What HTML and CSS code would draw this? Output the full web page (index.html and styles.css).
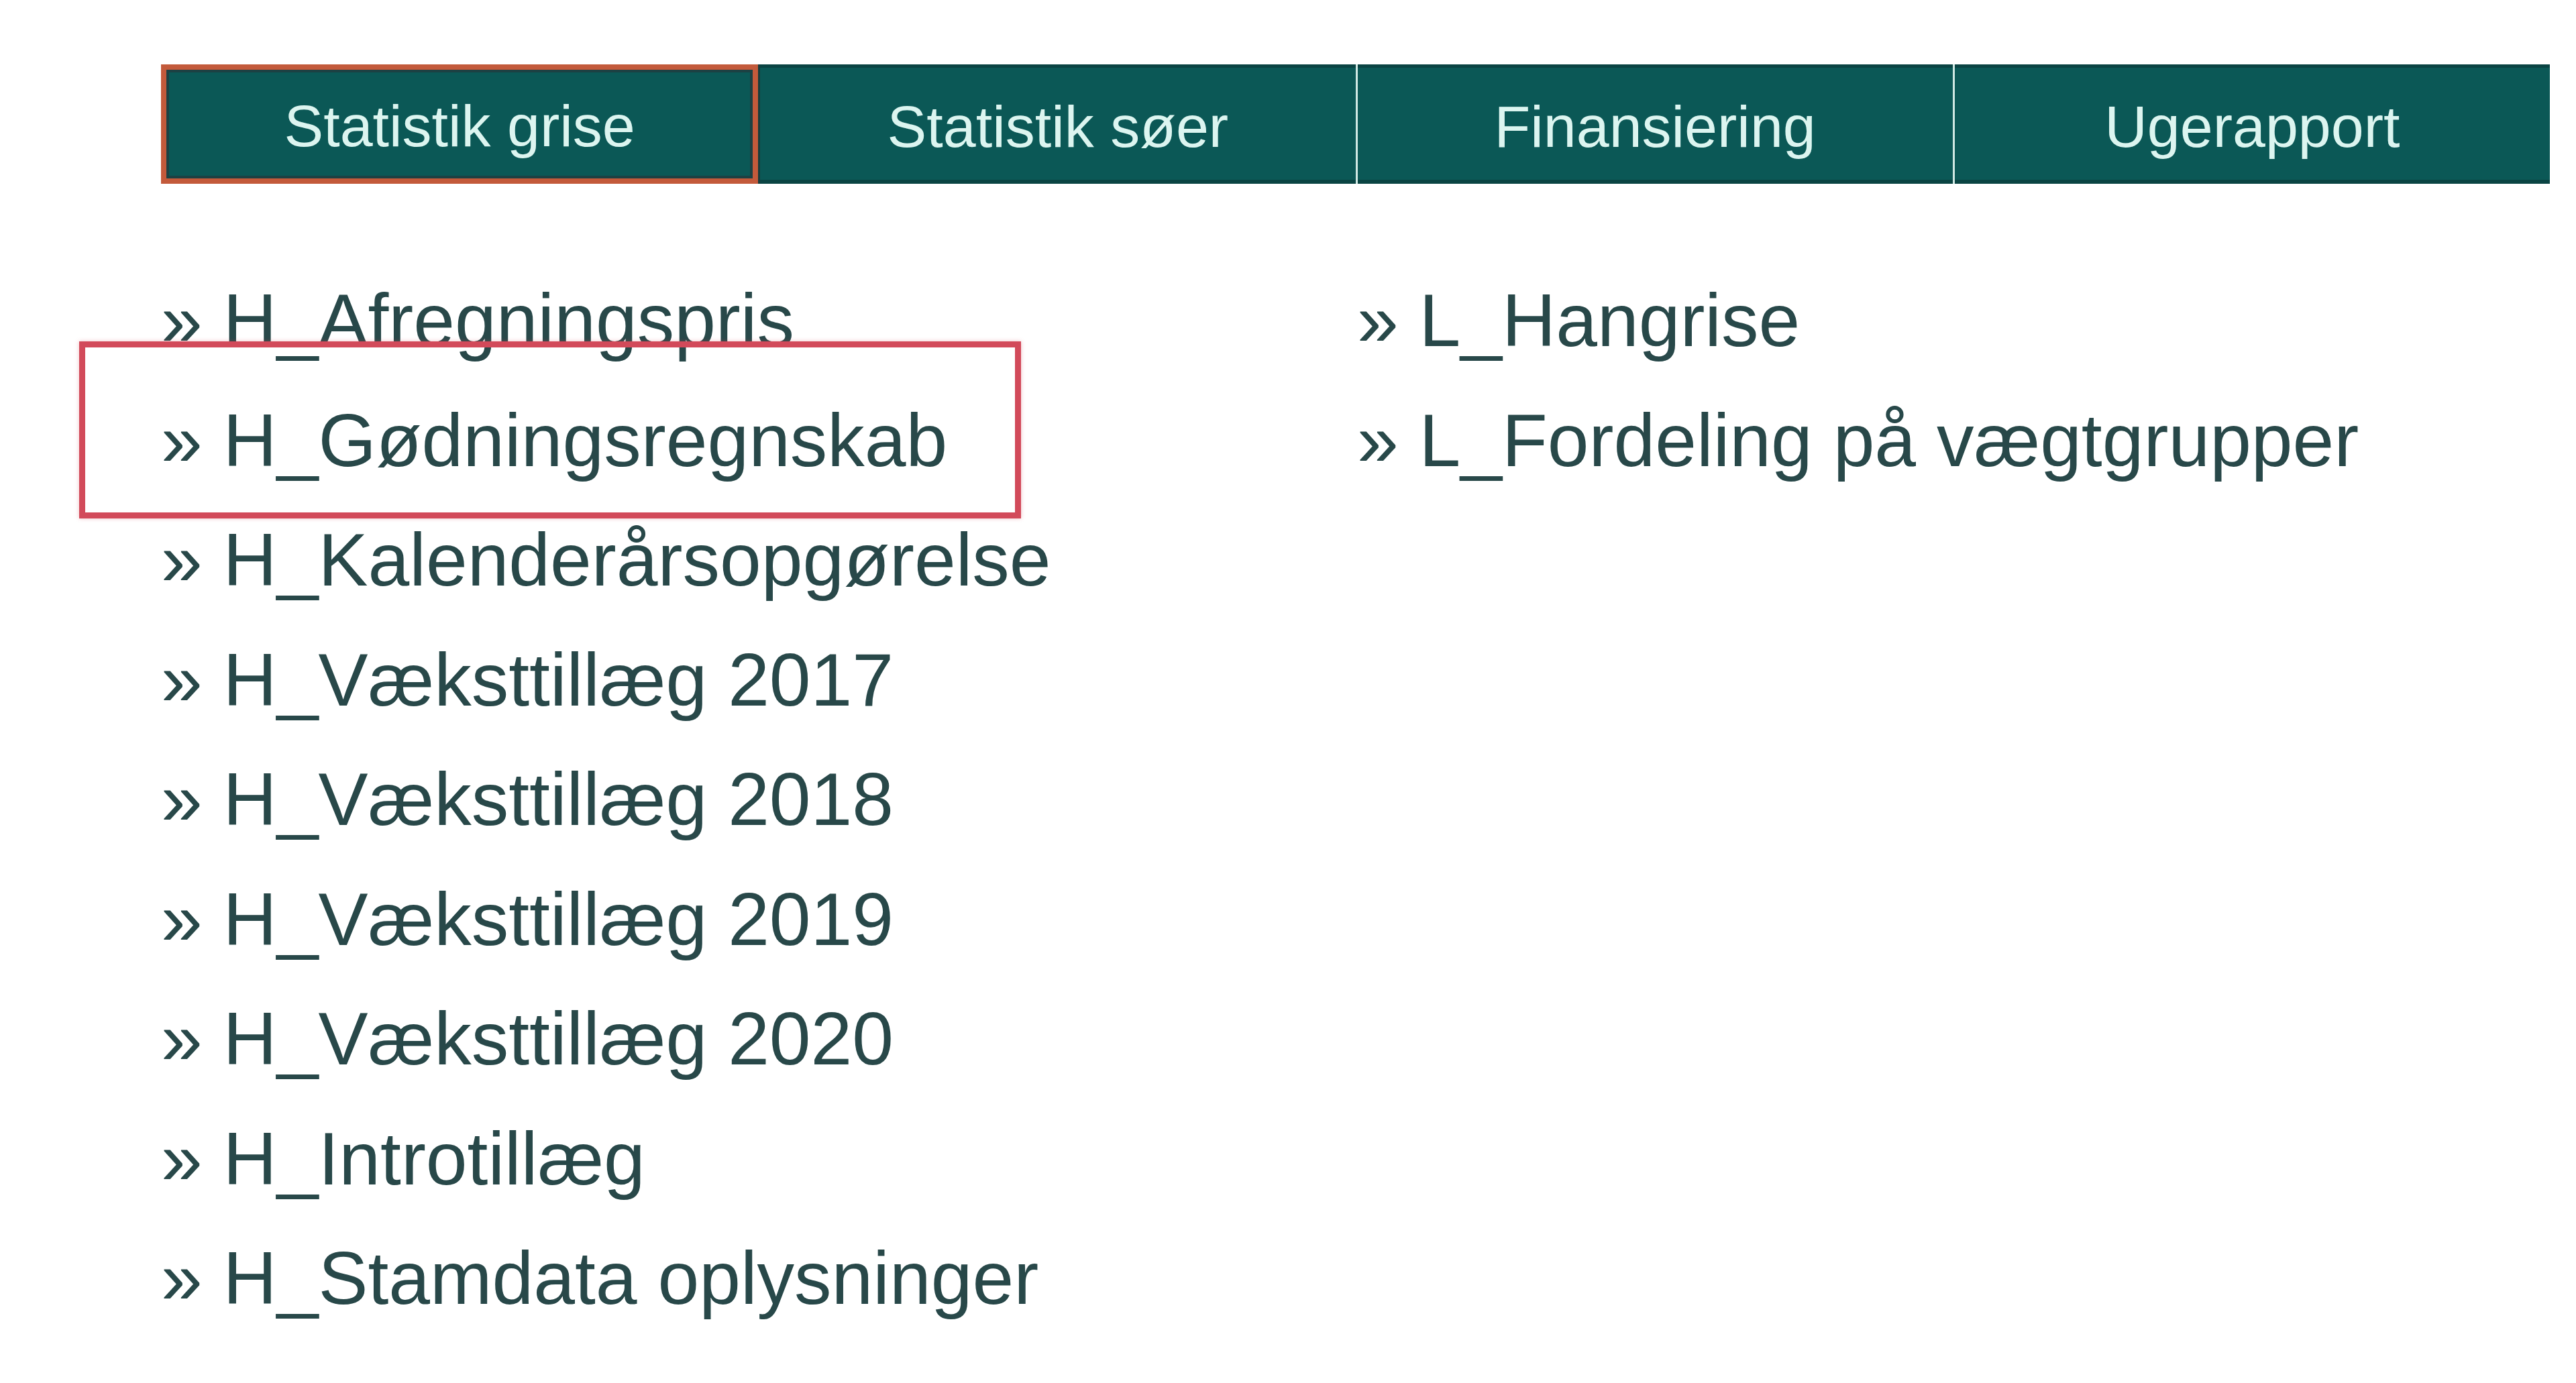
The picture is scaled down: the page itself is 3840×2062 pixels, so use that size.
FILE: index.html
```html
<!DOCTYPE html>
<html lang="da">
<head>
<meta charset="utf-8">
<title>Statistik grise</title>
<link rel="stylesheet" href="styles.css">
</head>
<body>
<div class="page">
  <nav class="tabs">
    <div class="tab active">Statistik grise</div>
    <div class="tab">Statistik søer</div>
    <div class="tab">Finansiering</div>
    <div class="tab">Ugerapport</div>
  </nav>
  <div class="lists">
    <ul class="col">
      <li>» H_Afregningspris</li>
      <li class="marked">» H_Gødningsregnskab<span class="highlight"></span></li>
      <li>» H_Kalenderårsopgørelse</li>
      <li>» H_Væksttillæg 2017</li>
      <li>» H_Væksttillæg 2018</li>
      <li>» H_Væksttillæg 2019</li>
      <li>» H_Væksttillæg 2020</li>
      <li>» H_Introtillæg</li>
      <li>» H_Stamdata oplysninger</li>
    </ul>
    <ul class="col">
      <li>» L_Hangrise</li>
      <li>» L_Fordeling på vægtgrupper</li>
    </ul>
  </div>
</div>
</body>
</html>
```
FILE: styles.css
```css
html, body {
  margin: 0;
  padding: 0;
  background: #ffffff;
}

.page {
  padding: 96px 0 0 240px;
  font-family: "Liberation Sans", Arial, sans-serif;
}

.tabs {
  display: grid;
  grid-template-columns: repeat(4, 1fr);
  width: 3561px;
  height: 178px;
}

.tab {
  display: flex;
  align-items: center;
  justify-content: center;
  padding-top: 7px;
  box-sizing: border-box;
  background: #0b5856;
  color: #dcf5f0;
  font-size: 88px;
  box-shadow: inset 0 5px 0 #0a4443, inset 0 -6px 0 #0a4443;
  border-left: 3px solid #cfe8e3;
}

.tab:first-child {
  border-left: none;
}

.tab.active {
  border: 8px solid #c35a3b;
  box-shadow: inset 0 0 0 4px #1c4143;
  padding-top: 5px;
}

.tab.active + .tab {
  border-left: 3px solid #173c3c;
}

.lists {
  display: grid;
  grid-template-columns: 1783px 1fr;
  margin-top: 115px;
}

.col {
  list-style: none;
  margin: 0;
  padding: 0;
}

.col li {
  font-size: 111px;
  line-height: 178.5px;
  color: #284849;
  white-space: nowrap;
}

.marked {
  position: relative;
}

.highlight {
  position: absolute;
  left: -122px;
  top: -59px;
  width: 1404px;
  height: 264px;
  box-sizing: border-box;
  border: 9px solid #d24a5a;
  box-shadow: 0 0 6px rgba(210, 74, 90, 0.35);
}
```
